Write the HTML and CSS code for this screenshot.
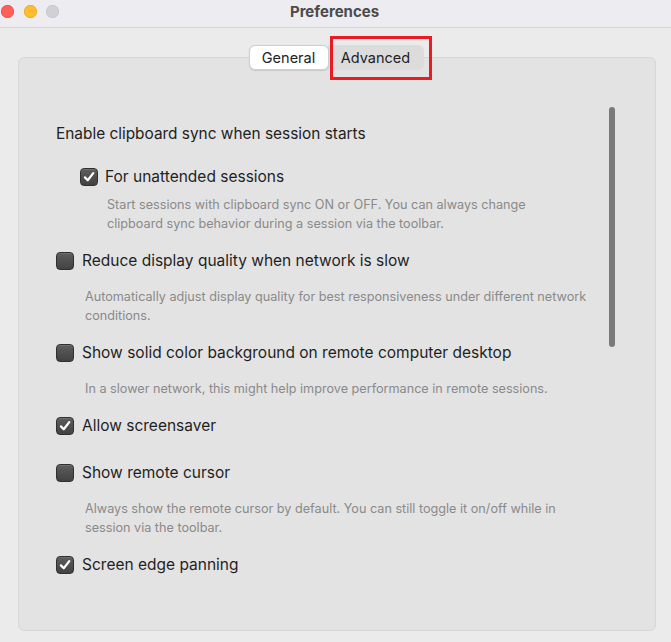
FILE: index.html
```html
<!DOCTYPE html>
<html>
<head>
<meta charset="utf-8">
<title>Preferences</title>
<link rel="stylesheet" href="styles.css">
</head>
<body>
<div class="window">
  <header class="titlebar">
    <div class="lights">
      <span class="light red"></span>
      <span class="light yellow"></span>
      <span class="light gray"></span>
    </div>
    <div class="title">Preferences</div>
  </header>

  <div class="tabs">
    <div class="seg">
      <span class="tab active">General</span>
      <span class="tab selected">Advanced</span>
      <span class="highlight"></span>
    </div>
  </div>

  <section class="panel">
    <div class="scrollbar"></div>
    <div class="content">
      <div class="heading">Enable clipboard sync when session starts</div>

      <div class="item sub tight">
        <label class="row"><span class="cb on"><svg viewBox="0 0 18 18"><path d="M4.4 9.4 L7.6 12.7 L13.8 4.6" /></svg></span><span class="label">For unattended sessions</span></label>
        <p class="desc">Start sessions with clipboard sync ON or OFF. You can always change<br>clipboard sync behavior during a session via the toolbar.</p>
      </div>

      <div class="item">
        <label class="row"><span class="cb"></span><span class="label">Reduce display quality when network is slow</span></label>
        <p class="desc">Automatically adjust display quality for best responsiveness under different network<br>conditions.</p>
      </div>

      <div class="item">
        <label class="row"><span class="cb"></span><span class="label">Show solid color background on remote computer desktop</span></label>
        <p class="desc">In a slower network, this might help improve performance in remote sessions.</p>
      </div>

      <div class="item spaced">
        <label class="row"><span class="cb on"><svg viewBox="0 0 18 18"><path d="M4.4 9.4 L7.6 12.7 L13.8 4.6" /></svg></span><span class="label">Allow screensaver</span></label>
      </div>

      <div class="item">
        <label class="row"><span class="cb"></span><span class="label">Show remote cursor</span></label>
        <p class="desc">Always show the remote cursor by default. You can still toggle it on/off while in<br>session via the toolbar.</p>
      </div>

      <div class="item">
        <label class="row"><span class="cb on"><svg viewBox="0 0 18 18"><path d="M4.4 9.4 L7.6 12.7 L13.8 4.6" /></svg></span><span class="label">Screen edge panning</span></label>
      </div>
    </div>
  </section>
</div>
</body>
</html>
```

FILE: styles.css
```css
* { box-sizing: border-box; }

html, body {
  margin: 0;
  padding: 0;
  background: #ebebeb;
  font-family: Inter, "Liberation Sans", Arial, sans-serif;
  color: #222;
  overflow: hidden;
}

.window {
  width: 671px;
  height: 642px;
}

.titlebar {
  height: 28px;
  background: #edecf1;
  border-bottom: 1px solid #d6d5d9;
  display: flex;
  align-items: center;
  justify-content: center;
  position: relative;
}

.lights {
  position: absolute;
  left: 0;
  top: 5px;
  display: flex;
  gap: 9px;
  padding-left: 1px;
}

.light {
  width: 13px;
  height: 13px;
  border-radius: 50%;
  display: block;
}
.light.red { background: #fe5f57; box-shadow: inset 0 0 0 0.5px #e2463f; }
.light.yellow { background: #febc2e; box-shadow: inset 0 0 0 0.5px #e1a116; margin-left: 1px; }
.light.gray { background: #d1d0d5; box-shadow: inset 0 0 0 0.5px #c2c1c6; }

.title {
  font-weight: 700;
  font-size: 15px;
  color: #4b4b4b;
  margin-top: -5px;
  margin-left: -2px;
}

.tabs {
  display: flex;
  justify-content: center;
  padding-top: 17px;
  margin-bottom: -13px;
  position: relative;
  z-index: 2;
}

.seg {
  display: flex;
  position: relative;
  margin-left: 1px;
}

.tab {
  height: 25px;
  line-height: 25px;
  font-size: 14.5px;
  color: #222;
  display: block;
}

.tab.active {
  width: 80px;
  text-align: center;
  background: #fff;
  border: 1px solid #cfcfcf;
  border-radius: 6px;
  line-height: 23px;
  box-shadow: 0 0.5px 1px rgba(0,0,0,0.12);
  position: relative;
  z-index: 1;
}

.tab.selected {
  width: 96px;
  text-align: center;
  background: #dcdcdc;
  border-radius: 0 6px 6px 0;
  margin-left: -1px;
}

.highlight {
  position: absolute;
  left: 81px;
  top: -9px;
  width: 102px;
  height: 44px;
  border: 3px solid #ea1b23;
  z-index: 3;
}

.panel {
  position: relative;
  margin-left: 18px;
  width: 638px;
  height: 574px;
  background: #e3e3e3;
  border: 1px solid #d7d7d7;
  border-radius: 6px;
}

.scrollbar {
  position: absolute;
  left: 590px;
  top: 49px;
  width: 6px;
  height: 240px;
  border-radius: 3px;
  background: #7a7a7a;
}

.content {
  padding: 67px 0 0 37px;
}

.heading {
  font-size: 15.4px;
  line-height: 18px;
  color: #222;
}

.item { margin-top: 19px; }
.item.sub { margin-top: 25px; margin-left: 24px; }
.item.spaced { padding-bottom: 10px; }

.row {
  display: flex;
  align-items: center;
  height: 18px;
}

.cb {
  width: 18px;
  height: 18px;
  border-radius: 4px;
  background: linear-gradient(#5d5d5d, #424242);
  border: 1px solid #2f2f2f;
  box-shadow: inset 0 1px 0 rgba(255,255,255,0.12);
  display: block;
  flex: none;
}

.cb svg {
  display: block;
  width: 16px;
  height: 16px;
}
.cb svg path {
  fill: none;
  stroke: #fff;
  stroke-width: 2.5;
  stroke-linecap: round;
  stroke-linejoin: round;
}

.label {
  font-size: 15.5px;
  line-height: 18px;
  margin-left: 8px;
  color: #1f1f1f;
}
.sub .label { margin-left: 7px; }

.desc {
  margin: 17px 0 0 29px;
  font-size: 12.65px;
  line-height: 19px;
  color: #8a8a8a;
}
.tight .desc { margin-top: 9px; margin-left: 27px; }
```
